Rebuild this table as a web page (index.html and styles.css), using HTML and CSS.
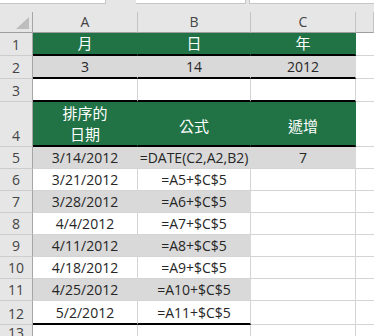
FILE: index.html
```html
<!DOCTYPE html>
<html lang="zh-Hant">
<head>
<meta charset="utf-8">
<title>DATE</title>
<link rel="stylesheet" href="styles.css">
</head>
<body>
<div class="topbar">
  <div class="box namebox"></div>
  <div class="box fxbox"></div>
  <div class="box fxbox2"></div>
</div>
<div class="sheet">
  <div class="corner"><svg width="32" height="20" viewBox="0 0 32 20"><polygon points="29,5 29,17 16,17" fill="#bdbdbd"/></svg></div>
  <div class="ch">A</div><div class="ch">B</div><div class="ch">C</div><div class="ch"></div>

  <div class="rh">1</div>
  <div class="c green thick">月</div><div class="c green thick">日</div><div class="c green thick end">年</div><div class="c d"></div>

  <div class="rh">2</div>
  <div class="c fill thick">3</div><div class="c fill thick">14</div><div class="c fill thick end">2012</div><div class="c d"></div>

  <div class="rh">3</div>
  <div class="c thick"></div><div class="c thick"></div><div class="c thick"></div><div class="c d"></div>

  <div class="rh">4</div>
  <div class="c green thick two">排序的<br>日期</div><div class="c green thick hdr">公式</div><div class="c green thick end hdr">遞增</div><div class="c d"></div>

  <div class="rh">5</div>
  <div class="c fill">3/14/2012</div><div class="c fill">=DATE(C2,A2,B2)</div><div class="c fill end">7</div><div class="c d"></div>

  <div class="rh">6</div>
  <div class="c">3/21/2012</div><div class="c">=A5+$C$5</div><div class="c"></div><div class="c d"></div>

  <div class="rh">7</div>
  <div class="c fill">3/28/2012</div><div class="c fill">=A6+$C$5</div><div class="c"></div><div class="c d"></div>

  <div class="rh">8</div>
  <div class="c">4/4/2012</div><div class="c">=A7+$C$5</div><div class="c"></div><div class="c d"></div>

  <div class="rh">9</div>
  <div class="c fill">4/11/2012</div><div class="c fill">=A8+$C$5</div><div class="c"></div><div class="c d"></div>

  <div class="rh">10</div>
  <div class="c">4/18/2012</div><div class="c">=A9+$C$5</div><div class="c"></div><div class="c d"></div>

  <div class="rh">11</div>
  <div class="c fill">4/25/2012</div><div class="c fill">=A10+$C$5</div><div class="c"></div><div class="c d"></div>

  <div class="rh">12</div>
  <div class="c thick">5/2/2012</div><div class="c thick">=A11+$C$5</div><div class="c"></div><div class="c d"></div>

  <div class="rh">13</div>
  <div class="c"></div><div class="c"></div><div class="c"></div><div class="c d"></div>
</div>
</body>
</html>
```
FILE: styles.css
```css
* { box-sizing: border-box; }
html, body {
  margin: 0;
  padding: 0;
  width: 374px;
  height: 336px;
  overflow: hidden;
  background: #e6e6e6;
  font-family: "Open Sans", "Noto Sans CJK TC", sans-serif;
}
.topbar {
  height: 12px;
  display: flex;
  align-items: flex-start;
}
.box {
  height: 4px;
  background: #fff;
  border-bottom: 1px solid #c6c6c6;
  border-right: 1px solid #c6c6c6;
}
.namebox { width: 106px; }
.fxbox { width: 110px; margin-left: 30px; }
.fxbox2 { flex: 1; margin-left: 3px; border-left: 1px solid #c6c6c6; border-right: none; }

.sheet {
  display: grid;
  grid-template-columns: 33px 105px 113px 105px 1fr;
  grid-template-rows: 21px 23px 23px 23px 45px repeat(7, 22px) 24px 1fr;
  background: #fff;
  height: 324px;
}
.corner {
  background: #e6e6e6;
  border-right: 1px solid #a6a6a6;
  border-bottom: 1px solid #9e9e9e;
  display: flex;
}
.ch {
  background: #e6e6e6;
  border-right: 1px solid #c4c4c4;
  border-bottom: 1px solid #9e9e9e;
  color: #444;
  font-size: 14px;
  line-height: 16px;
  display: flex;
  justify-content: center;
  align-items: flex-end;
  padding-bottom: 2px;
}
.rh {
  background: #e6e6e6;
  border-right: 1px solid #a6a6a6;
  border-bottom: 1px solid #cdcdcd;
  color: #444;
  font-size: 14px;
  line-height: 16px;
  display: flex;
  justify-content: center;
  align-items: flex-end;
  padding-bottom: 2px;
}
.c {
  border-right: 1px solid #d4d4d4;
  border-bottom: 1px solid #d4d4d4;
  color: #262626;
  font-size: 14px;
  line-height: 16px;
  display: flex;
  justify-content: center;
  align-items: flex-end;
  padding-bottom: 2px;
  white-space: nowrap;
  text-align: center;
}
.c.d { border-right: none; }
.green {
  background: #217346;
  color: #fff;
  border-right-color: #217346;
  font-size: 15px;
  line-height: 21px;
  padding-bottom: 0;
}
.fill {
  background: #d9d9d9;
  border-right-color: #d9d9d9;
}
.thick { border-bottom: 2px solid #000; }
.green.hdr { padding-bottom: 8px; }
.green.two { padding-bottom: 0; }
```
